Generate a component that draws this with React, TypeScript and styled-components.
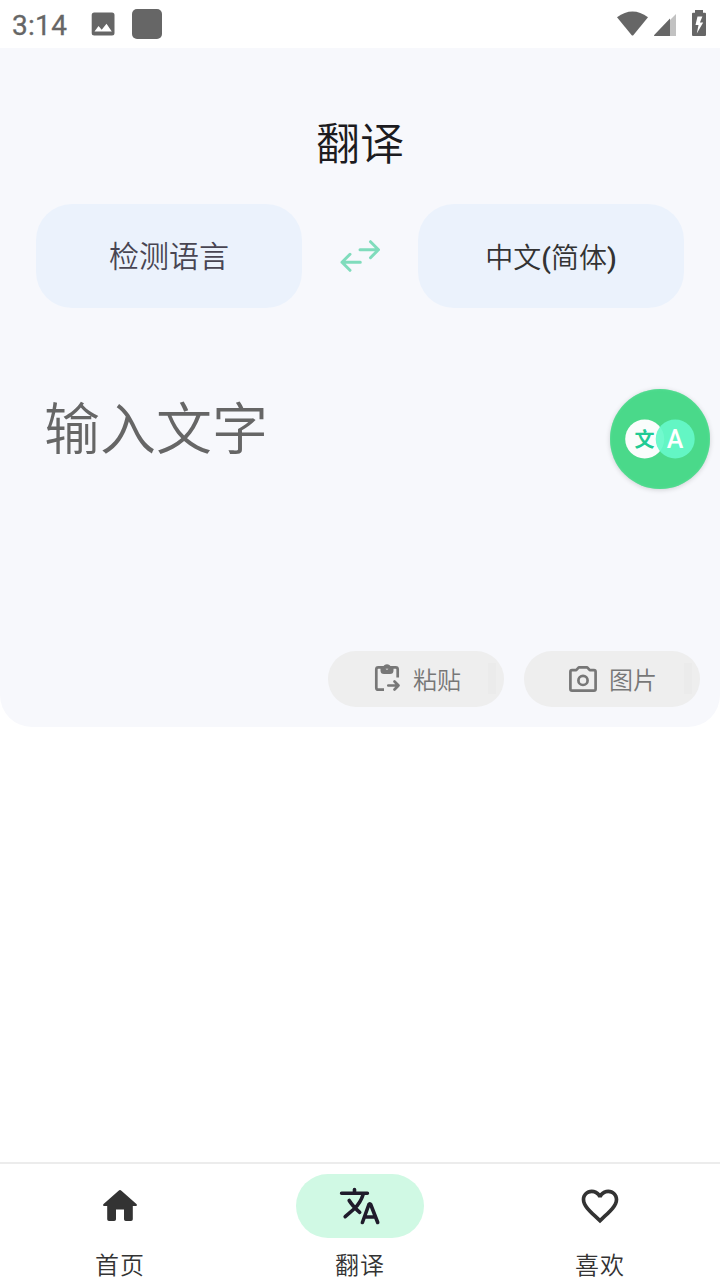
import React from "react";
import styled, { createGlobalStyle } from "styled-components";

const GlobalStyle = createGlobalStyle`
  * { box-sizing: border-box; }
  body { margin: 0; background: #fff; font-family: Roboto, "Noto Sans CJK SC", sans-serif; }
  button { border: 0; padding: 0; font: inherit; }
  svg { display: block; flex: none; }
`;

const Screen = styled.div`
  width: 720px;
  height: 1280px;
  display: flex;
  flex-direction: column;
  overflow: hidden;
  background: #fff;
  font-weight: 350;
`;

const StatusBar = styled.header`
  height: 48px;
  flex: none;
  display: flex;
  justify-content: space-between;
  padding: 0 12px;
`;

const StatusGroup = styled.div`
  display: flex;
  align-items: center;
`;

const Clock = styled.span`
  width: 79px;
  padding-top: 3px;
  font-size: 28px;
  font-weight: 400;
  line-height: 48px;
  letter-spacing: 0.3px;
  color: #666;
  -webkit-text-stroke: 0.3px #666;
`;

const AppBadge = styled.span`
  width: 30px;
  height: 30px;
  margin-left: 17px;
  border-radius: 5px;
  background: #666;
`;

const Panel = styled.main`
  position: relative;
  height: 679px;
  flex: none;
  display: flex;
  flex-direction: column;
  background: #f7f8fc;
  border-radius: 0 0 32px 32px;
`;

const Title = styled.h1`
  margin: 65px 0 0;
  height: 64px;
  line-height: 64px;
  text-align: center;
  font-size: 44px;
  font-weight: 350;
  color: #1c1b20;
`;

const LanguageRow = styled.div`
  display: flex;
  align-items: center;
  justify-content: space-between;
  margin-top: 27px;
  padding: 0 36px;
`;

const LanguageButton = styled.button<{ $size: number; $color: string; $drop: number }>`
  width: 266px;
  height: 104px;
  padding-top: ${(p) => p.$drop}px;
  border-radius: 36px;
  background: #ebf2fc;
  font-size: ${(p) => p.$size}px;
  line-height: 98px;
  color: ${(p) => p.$color};
`;

const Paren = styled.span`
  font-weight: 500;
`;

const Placeholder = styled.div`
  flex: 1;
  padding: 80px 44px 0;
  font-size: 56px;
  line-height: 84px;
  color: #666;
`;

const Actions = styled.div`
  display: flex;
  justify-content: flex-end;
  gap: 20px;
  padding: 0 20px 20px;
`;

const ActionButton = styled.button`
  width: 176px;
  height: 56px;
  display: flex;
  align-items: center;
  padding-left: 44px;
  gap: 11px;
  border-radius: 28px;
  background: linear-gradient(#ebebeb, #ebebeb) 160px 12px / 8px 31px no-repeat #eee;
  font-size: 24px;
  line-height: 56px;
  color: #777;
`;

const ActionLabel = styled.span`
  padding-top: 4px;
`;

const FloatingButton = styled.button`
  position: absolute;
  top: 341px;
  right: 10px;
  width: 100px;
  height: 100px;
  border-radius: 50%;
  background: #4ad98a;
  box-shadow: 0 1px 5px rgba(0, 0, 0, 0.16), inset 0 0 3px #5fe09a;
`;

const NavBar = styled.nav`
  height: 118px;
  flex: none;
  display: flex;
  margin-top: auto;
  border-top: 2px solid #ececec;
`;

const NavItem = styled.a`
  flex: 1;
  display: flex;
  flex-direction: column;
  align-items: center;
  padding-top: 10px;
`;

const NavPill = styled.span<{ $active?: boolean }>`
  width: 128px;
  height: 64px;
  flex: none;
  display: flex;
  align-items: center;
  justify-content: center;
  border-radius: 32px;
  background: ${(p) => (p.$active ? "#d0f9e4" : "transparent")};
`;

const NavLabel = styled.span`
  margin-top: 10px;
  font-size: 24px;
  line-height: 36px;
  letter-spacing: 1px;
  color: #333;
`;

const PhotoIcon = () => (
  <svg width="24" height="24" viewBox="0 0 24 24">
    <path fill="#666" fillRule="evenodd" d="M3.200 .5h17.800a2.500 2.500 0 0 1 2.500 2.500v18a2.500 2.500 0 0 1-2.500 2.500H3.200A2.500 2.500 0 0 1 .7 21V3A2.500 2.500 0 0 1 3.200.5ZM3.500 19.500h17.300L15.500 11.800l-4.800 6L7.500 14Z" />
  </svg>
);

const SystemIcons = () => (
  <svg width="92" height="28" viewBox="616 10 92 28">
    <path fill="#666" d="M617 17.200Q632.500 6 648 17.200L633.500 35q-1 1.200-2 0Z" />
    <path fill="#c2c2c2" d="M676 14v22h-6V20Z" />
    <path fill="#666" d="M670 18.500v17.500h-15.500q-1-.3-.3-1Z" />
    <path fill="#666" fillRule="evenodd" d="M695 10h8v2.700h2q1 0 1 1V35q0 1-1 1h-12q-1 0-1-1V13.700q0-1 1-1h2ZM697.500 16.500 695.500 25h3l-1.700 8.500 6.400-11h-3.300l2.500-6Z" />
  </svg>
);

const SwapIcon = () => (
  <svg width="44" height="36" viewBox="338 238 44 36" fill="none" stroke="#80dcbc" strokeWidth="3" strokeLinecap="round" strokeLinejoin="round">
    <path d="M360 249.700H378.300M370.500 241.700l8 8-8 8M360.300 262.300H342M350 254.300l-8 8 8 8" />
  </svg>
);

const PasteIcon = () => (
  <svg width="30" height="32" viewBox="372 663 30 32" fill="none" stroke="#777" strokeWidth="2.700" strokeLinecap="round" strokeLinejoin="round">
    <path strokeLinecap="butt" d="M384 689.700H378.300q-2 0-2-2V669.300q0-2 2-2H395.700q2 0 2 2V677.500" />
    <path fill="#777" stroke="none" fillRule="evenodd" d="M380.500 667h2.700a4 4 0 0 1 7.600 0h2.700v3.500q0 3.500-3.500 3.500h-6q-3.500 0-3.500-3.500ZM388.400 668.300a1.400 1.400 0 1 0-2.800 0 1.400 1.400 0 0 0 2.800 0Z" />
    <path d="M388.300 685.500H398.500M394.500 681.500l4 4-4 4" />
  </svg>
);

const CameraIcon = () => (
  <svg width="30" height="32" viewBox="568 663 30 32" fill="none" stroke="#777" strokeWidth="2.700" strokeLinejoin="round">
    <path d="M572 670.200h4.200l2.600-2.800h8.400l2.600 2.800h4.200q1.600 0 1.600 1.600v17.300q0 1.600-1.600 1.600H572q-1.600 0-1.600-1.600v-17.300q0-1.600 1.600-1.600Z" />
    <circle cx="583" cy="680.400" r="4.600" />
  </svg>
);

const BubbleIcon = () => (
  <svg width="100" height="100" viewBox="0 0 100 100" textAnchor="middle">
    <circle cx="34.700" cy="50" r="19.500" fill="#fafdfc" />
    <circle cx="65.200" cy="50" r="19.500" fill="#65f9c9" fillOpacity=".92" />
    <text x="34.500" y="57.500" fontSize="20" fontWeight="700" fontFamily="Noto Sans CJK SC, sans-serif" fill="#20cb94">文</text>
    <text x="65" y="58.700" fontSize="25" fontWeight="500" fontFamily="Roboto, sans-serif" fill="#fff">A</text>
  </svg>
);

const HomeIcon = () => (
  <svg width="40" height="40" viewBox="100 1186 40 40">
    <path fill="#333" d="M118.600 1190.700q1.400-1.200 2.800 0l15.300 13.600q.9 1.400-.7 1.700h-3.200v13.200q0 1.800-1.800 1.800h-5.200q-1.800 0-1.800-1.800V1209.500h-8v9.700q0 1.800-1.800 1.800h-5.200q-1.800 0-1.800-1.800V1206H104q-1.600-.3-.7-1.700Z" />
  </svg>
);

const TranslateIcon = () => (
  <svg width="44" height="40" viewBox="338 1186 44 40" fill="none" stroke="#1f1b2b" strokeWidth="3.600" strokeLinecap="round" strokeLinejoin="round">
    <path d="M341.600 1193.200H367.400M354.500 1189.500V1192.500M363.300 1194Q360.500 1203 354 1209L345.200 1216.700M349.200 1200.500Q352.500 1206 359.700 1212.300" />
    <path d="M362.400 1222.500 368.900 1204.500q.9-1.600 1.800 0L377.700 1222.500M365 1217H375.200" />
  </svg>
);

const HeartIcon = () => (
  <svg width="44" height="44" viewBox="0 0 24 24">
    <path fill="#333" d="M16.500 3c-1.740 0-3.410.81-4.500 2.090C10.910 3.810 9.240 3 7.500 3 4.420 3 2 5.420 2 8.500c0 3.780 3.400 6.860 8.550 11.540L12 21.350l1.450-1.320C18.600 15.360 22 12.280 22 8.500 22 5.420 19.580 3 16.500 3zm-4.400 15.550-.1.100-.1-.1C7.140 14.240 4 11.390 4 8.500 4 6.500 5.500 5 7.500 5c1.540 0 3.040.99 3.570 2.360h1.870C13.460 5.990 14.960 5 16.500 5c2 0 3.500 1.500 3.500 3.500 0 2.890-3.140 5.740-7.900 10.050z" />
  </svg>
);

export default function App() {
  return (
    <Screen>
      <GlobalStyle />
      <StatusBar>
        <StatusGroup>
          <Clock>3:14</Clock>
          <PhotoIcon />
          <AppBadge />
        </StatusGroup>
        <StatusGroup>
          <SystemIcons />
        </StatusGroup>
      </StatusBar>
      <Panel>
        <Title>翻译</Title>
        <LanguageRow>
          <LanguageButton $size={30} $color="#484552" $drop={2}>检测语言</LanguageButton>
          <SwapIcon />
          <LanguageButton $size={28} $color="#333" $drop={6}>中文<Paren>(</Paren>简体<Paren>)</Paren></LanguageButton>
        </LanguageRow>
        <Placeholder>输入文字</Placeholder>
        <Actions>
          <ActionButton><PasteIcon /><ActionLabel>粘贴</ActionLabel></ActionButton>
          <ActionButton><CameraIcon /><ActionLabel>图片</ActionLabel></ActionButton>
        </Actions>
        <FloatingButton aria-label="翻译"><BubbleIcon /></FloatingButton>
      </Panel>
      <NavBar>
        <NavItem><NavPill><HomeIcon /></NavPill><NavLabel>首页</NavLabel></NavItem>
        <NavItem><NavPill $active><TranslateIcon /></NavPill><NavLabel>翻译</NavLabel></NavItem>
        <NavItem><NavPill><HeartIcon /></NavPill><NavLabel>喜欢</NavLabel></NavItem>
      </NavBar>
    </Screen>
  );
}
